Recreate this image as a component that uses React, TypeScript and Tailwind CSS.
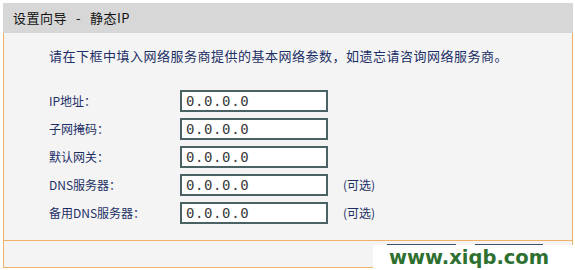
const fields = [
  { label: 'IP地址：', value: '0.0.0.0', optional: false },
  { label: '子网掩码：', value: '0.0.0.0', optional: false },
  { label: '默认网关：', value: '0.0.0.0', optional: false },
  { label: 'DNS服务器：', value: '0.0.0.0', optional: true },
  { label: '备用DNS服务器：', value: '0.0.0.0', optional: true },
]

const cjk = "font-['Noto_Sans_CJK_SC',sans-serif]"

function FieldRow({ label, value, optional }: { label: string; value: string; optional: boolean }) {
  return (
    <div className="flex h-[22px] items-center">
      <span className="w-[131px] text-[12px] text-[#1c2f66]">{label}</span>
      <div className="flex h-[22px] w-[148px] items-center border-2 border-[#4b6264] bg-white pl-[4px] font-['DejaVu_Sans_Mono',monospace] text-[14px] leading-none tracking-[0.6px] text-[#3a3a3a]">
        {value}
      </div>
      {optional && <span className="ml-[15px] text-[12px] text-[#1c2f66]">(可选)</span>}
    </div>
  )
}

export default function App() {
  return (
    <div className={`relative h-[270px] w-[575px] overflow-hidden bg-white pl-[3px] pr-[2px] pt-[3px] ${cjk}`}>
      <div className="flex h-[30px] items-center bg-[#d7d7d7] pl-[10px] text-[13px] tracking-[0.5px] text-[#111]">
        <span>设置向导</span>
        <span className="mx-[9px]">-</span>
        <span>静态IP</span>
      </div>

      <div className="border-x border-b border-[#eeb06a] bg-[#f4f4f4] pb-[16px] pl-[45px] pt-[13px]">
        <p className="h-[20px] text-[13px] leading-[20px] tracking-[0.5px] text-[#1c2f66]">
          请在下框中填入网络服务商提供的基本网络参数，如遗忘请咨询网络服务商。
        </p>
        <div className="mt-[24px] flex flex-col gap-[6px]">
          {fields.map(f => (
            <FieldRow key={f.label} {...f} />
          ))}
        </div>
      </div>

      <div className="flex h-[27px] items-start gap-[19px] border-x border-b border-[#eeb06a] bg-[#f4f4f4] pl-[383px] pt-[3px]">
        <button aria-label="上一步" className="h-[22px] w-[69px] border border-[#3d4f66] bg-[#e9eef4]" />
        <button aria-label="下一步" className="h-[22px] w-[68px] border border-[#3d4f66] bg-[#e9eef4]" />
      </div>

      <div className="absolute left-[373px] top-[245px] flex h-[25px] w-[202px] items-center bg-white pl-[16px] font-['DejaVu_Sans',sans-serif] text-[19.5px] font-bold leading-none text-[#2e7030]">
        www.xiqb.com
      </div>
    </div>
  )
}
